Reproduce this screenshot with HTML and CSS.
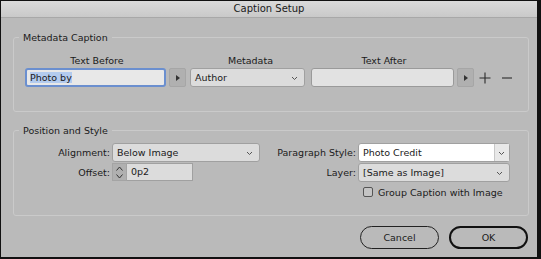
FILE: index.html
```html
<!DOCTYPE html>
<html>
<head>
  <meta charset="utf-8">
  <title>Caption Setup</title>
  <link rel="stylesheet" href="styles.css">
</head>
<body>
  <div class="dialog">
    <div class="titlebar">Caption Setup</div>
    <div class="content">
      <fieldset class="group meta">
        <legend>Metadata Caption</legend>
        <div class="meta-grid">
          <div class="head h-before">Text Before</div>
          <div class="head h-meta">Metadata</div>
          <div class="head h-after">Text After</div>

          <div class="cell"><div class="field focus"><span class="sel">Photo by</span></div></div>
          <div class="cell"><div class="arrow"><span class="tri"></span></div></div>
          <div class="cell"><div class="select">Author<svg class="chev" width="7" height="5" viewBox="0 0 7 5"><path d="M1 1 L3.5 3.5 L6 1" fill="none" stroke="#555" stroke-width="1"/></svg></div></div>
          <div class="cell"><div class="field after"></div></div>
          <div class="cell"><div class="arrow"><span class="tri"></span></div></div>
          <div class="cell tools">
            <svg width="12" height="12" viewBox="0 0 12 12"><path d="M6 0.5 V11.5 M0.5 6 H11.5" stroke="#2a2a2a" stroke-width="1.1"/></svg>
            <svg width="12" height="12" viewBox="0 0 12 12"><path d="M1 6 H11" stroke="#2a2a2a" stroke-width="1.1"/></svg>
          </div>
        </div>
      </fieldset>

      <fieldset class="group pos">
        <legend>Position and Style</legend>
        <div class="pos-grid">
          <div class="col">
            <label class="lbl">Alignment:</label>
            <div class="select">Below Image<svg class="chev" width="7" height="5" viewBox="0 0 7 5"><path d="M1 1 L3.5 3.5 L6 1" fill="none" stroke="#555" stroke-width="1"/></svg></div>
            <label class="lbl">Offset:</label>
            <div class="spin">
              <span class="spinner">
                <svg width="9" height="15" viewBox="0 0 9 15"><path d="M1.5 5.5 L4.5 2 L7.5 5.5 M1.5 9.5 L4.5 13 L7.5 9.5" fill="none" stroke="#333" stroke-width="1"/></svg>
              </span>
              <span class="val">0p2</span>
            </div>
          </div>
          <div class="col right">
            <label class="lbl">Paragraph Style:</label>
            <div class="select white">Photo Credit<span class="drop"><svg class="chev" width="7" height="5" viewBox="0 0 7 5"><path d="M1 1 L3.5 3.5 L6 1" fill="none" stroke="#555" stroke-width="1"/></svg></span></div>
            <label class="lbl">Layer:</label>
            <div class="select">[Same as Image]<svg class="chev" width="7" height="5" viewBox="0 0 7 5"><path d="M1 1 L3.5 3.5 L6 1" fill="none" stroke="#555" stroke-width="1"/></svg></div>
            <span></span>
            <label class="check"><span class="box"></span>Group Caption with Image</label>
          </div>
        </div>
      </fieldset>

      <div class="buttons">
        <button class="btn">Cancel</button>
        <button class="btn ok">OK</button>
      </div>
    </div>
  </div>
</body>
</html>
```

FILE: styles.css
```css
* {
  margin: 0; padding: 0;
  box-sizing: border-box; }
html, body {
  width: 541px; height: 259px;
  overflow: hidden; }
body {
  font-family: "DejaVu Sans", sans-serif;
  font-size: 9.5px;
  color: #1a1a1a;
  background: #1a1a1a; }

.dialog {
  width: 541px; height: 259px;
  border: 1px solid #111;
  border-right-width: 4px;
  border-bottom-width: 2px;
  background: #bababa;
  display: flex;
  flex-direction: column; }

.titlebar {
  height: 17px;
  line-height: 16px;
  text-align: center;
  font-size: 10px;
  background: linear-gradient(#dadada, #c9c9c9);
  border-bottom: 1px solid #a8a8a8; }

.content {
  padding: 14px 8px 0 12px;
  flex: 1;
  display: flex;
  flex-direction: column; }

/* group boxes */
.group {
  border: 1px solid #cacaca;
  border-radius: 3px;
  padding: 0 0 0 11px; }
.group legend {
  padding: 0 4px;
  margin-left: -6px; }
.meta { height: 80px; }
.pos { height: 91px; margin-top: 13px; }

/* metadata row */
.meta-grid {
  display: grid;
  grid-template-columns: 144px 21px 121px 146px 20px auto;
  grid-template-rows: 16px 19px;
  margin-top: 9px;
  align-items: center; }
.meta-grid > .cell { grid-row: 2; }
.head { grid-row: 1; text-align: center; }
.h-before { grid-column: 1; }
.h-meta { grid-column: 3; }
.h-after { grid-column: 4; }

.field {
  height: 19px;
  background: #e2e2e2;
  border: 1px solid #9a9a9a;
  border-radius: 3px;
  padding: 0 4px;
  line-height: 17px;
  margin-right: 3px; }
.field.focus {
  border: 2px solid #6b8fcf;
  background: #e8e8e8;
  padding: 0 3px;
  line-height: 15px; }
.sel { background: #b3cbee; }

.arrow {
  width: 17px; height: 19px;
  background: #b0b0b0;
  border: 1px solid #a6a6a6;
  border-radius: 2px;
  display: flex;
  align-items: center;
  justify-content: center; }
.tri {
  width: 0; height: 0;
  border-top: 3px solid transparent;
  border-bottom: 3px solid transparent;
  border-left: 4px solid #333; }

.select {
  position: relative;
  height: 19px;
  background: #dcdcdc;
  border: 1px solid #a0a0a0;
  border-radius: 3px;
  padding: 0 4px;
  line-height: 17px;
  margin-right: 6px; }
.chev {
  position: absolute;
  right: 6px; top: 7px; }
.tools {
  display: flex;
  align-items: center;
  gap: 10px;
  padding-left: 2px; }

/* position and style */
.pos-grid {
  display: flex;
  margin-top: 6px; }
.col {
  display: grid;
  grid-template-columns: 85px 148px;
  grid-auto-rows: 20px;
  align-items: center;
  column-gap: 2px; }
.col.right {
  grid-template-columns: 94px 152px;
  margin-left: 2px; }
.lbl { text-align: right; }
.col .select { margin-right: 0; }
.select.white { background: #fff; }
.drop {
  position: absolute;
  right: 0; top: 0; bottom: 0;
  width: 15px;
  background: #e8e8e8;
  border-left: 1px solid #c8c8c8; }
.drop .chev { right: 4px; }

.spin {
  display: flex;
  width: 81px; height: 18px; }
.spinner {
  width: 15px;
  background: #b0b0b0;
  border: 1px solid #a4a4a4;
  display: flex;
  align-items: center;
  justify-content: center; }
.val {
  flex: 1;
  background: #dcdcdc;
  border: 1px solid #a0a0a0;
  border-left: none;
  padding: 0 4px;
  line-height: 16px; }

.check {
  display: flex;
  align-items: center;
  gap: 5px;
  padding-left: 5px; }
.box {
  width: 10px; height: 10px;
  border: 1px solid #555;
  border-radius: 2px;
  background: #c4c4c4; }

/* buttons */
.buttons {
  display: flex;
  justify-content: flex-end;
  gap: 10px;
  margin-top: 10px;
  padding-right: 1px; }
.btn {
  width: 79px; height: 23px;
  font-family: inherit;
  font-size: 9.5px;
  background: #bababa;
  border: 1px solid #222;
  border-radius: 12px;
  color: #1a1a1a; }
.btn.ok { border: 2px solid #111; }
```
